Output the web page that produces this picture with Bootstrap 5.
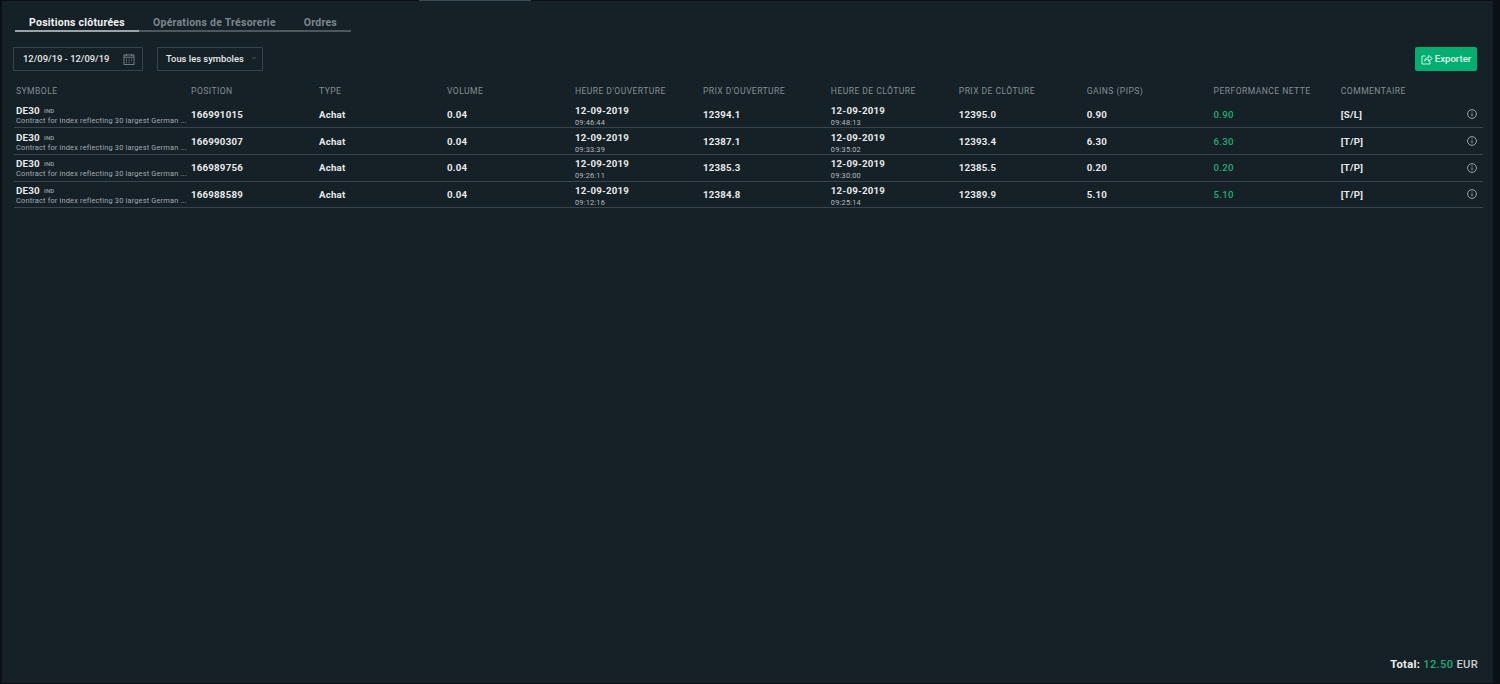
<!DOCTYPE html>
<html lang="fr">
<head>
<meta charset="utf-8">
<title>Positions clôturées</title>
<link href="https://cdn.jsdelivr.net/npm/bootstrap@5.3.0/dist/css/bootstrap.min.css" rel="stylesheet">
<style>
html,body{height:100%;margin:0;background:#0a1013;overflow:hidden}
body{font-family:Roboto,"Liberation Sans",sans-serif;color:#e8eaeb}
.shell{width:1491px;height:682px;margin:1px 0 0 2px;background:#152027;position:relative;display:flex;flex-direction:column;padding:0 15px 0 12px}
.topmark{position:absolute;left:417px;top:-1px;width:112px;height:1px;background:#3d4a52}
.tabbar{display:flex;margin:14px 0 0 1px;width:336px;border-bottom:2px solid #4c575e;height:17px}
.tabitem{flex:none;font-size:10.45px;font-weight:700;letter-spacing:.28px;color:#7d878d;line-height:14px;padding:1px 14px 0;text-align:center;white-space:nowrap;height:17px;margin-bottom:-2px}
.tabitem.on{color:#f2f3f4;border-bottom:2px solid #9aa3a8;width:124px;padding:1px 0 0}
.filters{display:flex;align-items:center;gap:14px;margin-top:15px;height:24px;margin-left:-1px}
.fbox{height:24px;border:1px solid #34424b;display:flex;align-items:center;font-size:9.4px;font-weight:500;color:#e6e8e9;white-space:nowrap}
.fdate{width:130px;padding:0 7px 0 9px;justify-content:space-between}
.fsel{width:106px;padding:0 0 0 8px;position:relative}
.caret{position:absolute;right:5px;top:9px;width:0;height:0;border:3.5px solid transparent;border-top:3.500px solid #2f3b43;border-bottom:0}
.exportbtn{margin-left:auto;margin-right:1px;height:24px;width:62px;padding:0;background:#00b070;border:0;border-radius:2px;color:#e6f6f0;font-size:9.6px;font-weight:500;display:flex;align-items:center;justify-content:center;gap:2px}
.pos{table-layout:fixed;width:1469px;border-collapse:collapse;margin-top:9px}
.pos th{font-size:8.6px;letter-spacing:.42px;font-weight:400;color:#868d92;text-transform:uppercase;padding:0 0 0 2px;height:21px;white-space:nowrap;vertical-align:middle;line-height:10px}
.pos td{height:26.7px;padding:0 0 0 2px;border-bottom:1px solid #39454d;font-size:9.7px;font-weight:700;letter-spacing:.2px;color:#e8eaeb;vertical-align:middle;white-space:nowrap;line-height:11px}
.pos td.stacked{padding-top:3px}
.pos td.symcell{padding-top:1px}
.sym{font-size:9.8px}
.ind{font-size:6px;font-weight:700;color:#8a9399;margin-left:4px;vertical-align:1px;letter-spacing:.2px}
.desc{font-size:7.4px;font-weight:400;color:#a3abb0;line-height:9px;letter-spacing:.18px}
.tm{font-size:7.4px;font-weight:400;color:#b5bbbf;line-height:9px;letter-spacing:.2px;margin-top:2px}
.pos td.gain,.gain{color:#1fae73;font-weight:500}
.foot{margin-top:auto;margin-bottom:11px;text-align:right;font-size:11.2px;font-weight:500;color:#c9cdd0;letter-spacing:.3px;line-height:14px}
.foot b{color:#eef0f1}
.infoic{display:block;margin-left:auto;margin-right:6px}
</style>
</head>
<body>
<div class="shell">
  <div class="topmark"></div>
  <div class="tabbar">
    <div class="tabitem on">Positions clôturées</div>
    <div class="tabitem">Opérations de Trésorerie</div>
    <div class="tabitem">Ordres</div>
  </div>
  <div class="filters">
    <div class="fbox fdate"><span>12/09/19 - 12/09/19</span>
      <svg width="12" height="12" viewBox="0 0 12 12" fill="none" stroke="#8a9399" stroke-width=".8"><rect x="1" y="2" width="10" height="9.4"/><path d="M1 4.2h10M3.4.8v2M8.6.8v2"/><path d="M3 6h1M5.5 6h1M8 6h1M3 7.8h1M5.5 7.8h1M8 7.8h1M3 9.6h1M5.5 9.6h1"/></svg>
    </div>
    <div class="fbox fsel">Tous les symboles<span class="caret"></span></div>
    <button type="button" class="btn exportbtn">
      <svg width="12" height="11" viewBox="0 0 12 11" fill="none" stroke="#e6f6f0" stroke-width=".9"><path d="M4.5 2H1v8h8V7"/><path d="M3.4 7.2C3.6 4.8 5.3 3.6 7.6 3.6V1.4L11.3 4.4 7.6 7.2V5.2C5.8 5.2 4.4 5.800 3.400 7.200Z"/></svg>
      Exporter
    </button>
  </div>
  <table class="pos">
    <colgroup>
      <col style="width:175px"><col style="width:127.9px"><col style="width:127.9px"><col style="width:127.9px"><col style="width:127.9px"><col style="width:127.9px"><col style="width:127.9px"><col style="width:127.9px"><col style="width:126.8px"><col style="width:127.2px"><col style="width:102px"><col style="width:42px">
    </colgroup>
    <thead>
      <tr><th>Symbole</th><th>Position</th><th>Type</th><th>Volume</th><th>Heure d'ouverture</th><th>Prix d'ouverture</th><th>Heure de clôture</th><th>Prix de clôture</th><th>Gains (pips)</th><th>Performance nette</th><th>Commentaire</th><th></th></tr>
    </thead>
    <tbody>
      <tr><td class="symcell"><div class="sym">DE30<span class="ind">IND</span></div><div class="desc">Contract for index reflecting 30 largest German ...</div></td><td>166991015</td><td>Achat</td><td>0.04</td><td class="stacked">12-09-2019<div class="tm">09:46:44</div></td><td>12394.1</td><td class="stacked">12-09-2019<div class="tm">09:48:13</div></td><td>12395.0</td><td>0.90</td><td class="gain">0.90</td><td>[S/L]</td><td><svg class="infoic" width="10" height="10" viewBox="0 0 10 10" fill="none" stroke="#a9b0b4" stroke-width=".9"><circle cx="5" cy="5" r="4.4"/><path d="M5 4.400v3M5 2.400v1"/></svg></td></tr>
      <tr><td class="symcell"><div class="sym">DE30<span class="ind">IND</span></div><div class="desc">Contract for index reflecting 30 largest German ...</div></td><td>166990307</td><td>Achat</td><td>0.04</td><td class="stacked">12-09-2019<div class="tm">09:33:39</div></td><td>12387.1</td><td class="stacked">12-09-2019<div class="tm">09:35:02</div></td><td>12393.4</td><td>6.30</td><td class="gain">6.30</td><td>[T/P]</td><td><svg class="infoic" width="10" height="10" viewBox="0 0 10 10" fill="none" stroke="#a9b0b4" stroke-width=".9"><circle cx="5" cy="5" r="4.4"/><path d="M5 4.400v3M5 2.400v1"/></svg></td></tr>
      <tr><td class="symcell"><div class="sym">DE30<span class="ind">IND</span></div><div class="desc">Contract for index reflecting 30 largest German ...</div></td><td>166989756</td><td>Achat</td><td>0.04</td><td class="stacked">12-09-2019<div class="tm">09:26:11</div></td><td>12385.3</td><td class="stacked">12-09-2019<div class="tm">09:30:00</div></td><td>12385.5</td><td>0.20</td><td class="gain">0.20</td><td>[T/P]</td><td><svg class="infoic" width="10" height="10" viewBox="0 0 10 10" fill="none" stroke="#a9b0b4" stroke-width=".9"><circle cx="5" cy="5" r="4.4"/><path d="M5 4.400v3M5 2.400v1"/></svg></td></tr>
      <tr><td class="symcell"><div class="sym">DE30<span class="ind">IND</span></div><div class="desc">Contract for index reflecting 30 largest German ...</div></td><td>166988589</td><td>Achat</td><td>0.04</td><td class="stacked">12-09-2019<div class="tm">09:12:16</div></td><td>12384.8</td><td class="stacked">12-09-2019<div class="tm">09:25:14</div></td><td>12389.9</td><td>5.10</td><td class="gain">5.10</td><td>[T/P]</td><td><svg class="infoic" width="10" height="10" viewBox="0 0 10 10" fill="none" stroke="#a9b0b4" stroke-width=".9"><circle cx="5" cy="5" r="4.4"/><path d="M5 4.400v3M5 2.400v1"/></svg></td></tr>
    </tbody>
  </table>
  <div class="foot"><b>Total:</b> <span class="gain">12.50</span> EUR</div>
</div>
<script src="https://cdn.jsdelivr.net/npm/bootstrap@5.3.0/dist/js/bootstrap.bundle.min.js"></script>
</body>
</html>
